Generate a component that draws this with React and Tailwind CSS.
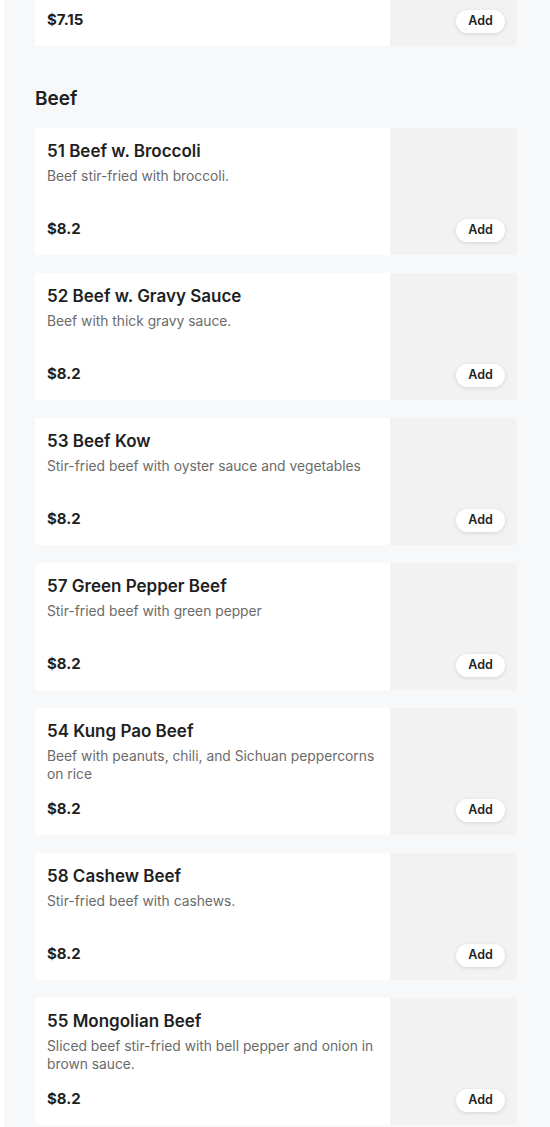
const beef = [
  { name: '51 Beef w. Broccoli', desc: 'Beef stir-fried with broccoli.', price: '$8.2' },
  { name: '52 Beef w. Gravy Sauce', desc: 'Beef with thick gravy sauce.', price: '$8.2' },
  { name: '53 Beef Kow', desc: 'Stir-fried beef with oyster sauce and vegetables', price: '$8.2' },
  { name: '57 Green Pepper Beef', desc: 'Stir-fried beef with green pepper', price: '$8.2' },
  { name: '54 Kung Pao Beef', desc: 'Beef with peanuts, chili, and Sichuan peppercorns on rice', price: '$8.2' },
  { name: '58 Cashew Beef', desc: 'Stir-fried beef with cashews.', price: '$8.2' },
  { name: '55 Mongolian Beef', desc: 'Sliced beef stir-fried with bell pepper and onion in brown sauce.', price: '$8.2' },
];

function MenuCard({ item, className = '' }) {
  return (
    <div className={`flex flex-shrink-0 h-[127px] rounded-[3px] overflow-hidden bg-white ${className}`}>
      <div className="flex-1 flex flex-col justify-between pl-3 pr-1 pt-[11px] pb-[15px] min-w-0">
        <div>
          {item.name && (
            <h3 className="text-[17px] leading-[24px] font-semibold text-[#1f1f1f]">{item.name}</h3>
          )}
          {item.desc && (
            <p className="mt-[4px] text-[13.8px] leading-[18px] text-[#6b6b6b]">{item.desc}</p>
          )}
        </div>
        <p className="text-[15px] leading-[22px] font-bold text-[#1f1f1f]">{item.price}</p>
      </div>
      <div className="w-[127px] flex-shrink-0 bg-[#f2f2f2] flex items-end justify-end p-3 pb-[13px]">
        <button className="h-[23px] w-[49px] rounded-full bg-white text-[12.5px] font-semibold text-[#1f1f1f] shadow-[0_1px_4px_rgba(0,0,0,0.12)]">
          Add
        </button>
      </div>
    </div>
  );
}

export default function App() {
  return (
    <div className="w-[550px] h-[1127px] overflow-hidden bg-white pl-1" style={{ fontFamily: 'Inter, "Liberation Sans", sans-serif' }}>
      <div className="h-full flex flex-col bg-[#f7f8fa] pl-[31px] pr-[33px]">
        <MenuCard item={{ price: '$7.15' }} className="-mt-[81px]" />

        <h2 className="mt-[39px] mb-[15px] text-[19px] leading-[28px] font-semibold text-[#1f1f1f]">Beef</h2>

        <div className="flex flex-col gap-[18px]">
          {beef.map((item) => (
            <MenuCard key={item.name} item={item} />
          ))}
        </div>
      </div>
    </div>
  );
}
